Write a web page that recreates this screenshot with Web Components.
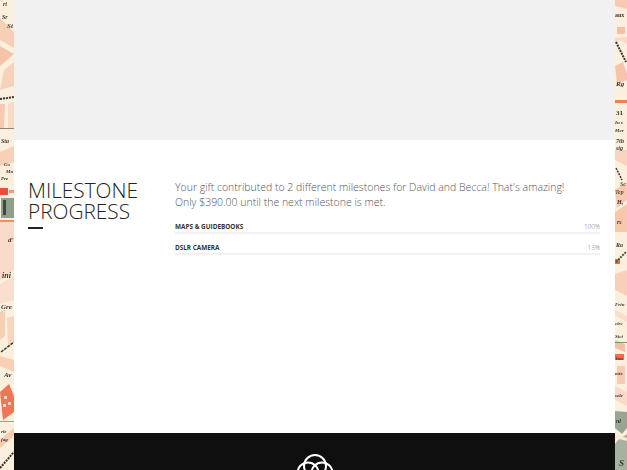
<!DOCTYPE html>
<html>
<head>
<meta charset="utf-8">
<title>Milestone progress</title>
<style>
  html, body { margin: 0; height: 100%; overflow: hidden; }
  body { font-family: "Open Sans", "Liberation Sans", sans-serif; background: #fff; }
</style>
</head>
<body>
<gift-page>
  <map-strip slot="left" side="left"></map-strip>
  <map-strip slot="right" side="right"></map-strip>
  <milestone-section heading="MILESTONE PROGRESS">
    Your gift contributed to 2 different milestones for David and Becca! That's amazing!<br>
    Only $390.00 until the next milestone is met.
    <milestone-bar slot="bars" label="MAPS &amp; GUIDEBOOKS" percent="100%"></milestone-bar>
    <milestone-bar slot="bars" label="DSLR CAMERA" percent="13%"></milestone-bar>
  </milestone-section>
</gift-page>

<script>
const pageTemplate = document.createElement('template');
pageTemplate.innerHTML = `
  <style>
    :host {
      display: flex;
      width: 627px;
      height: 470px;
      overflow: hidden;
    }
    .middle {
      flex: 1;
      display: flex;
      flex-direction: column;
      min-width: 0;
    }
    .hero {
      height: 140px;
      background: #f1f1f1;
    }
    .content {
      flex: 1;
      background: #fff;
    }
    site-footer {
      height: 37px;
    }
  </style>
  <slot name="left"></slot>
  <div class="middle">
    <div class="hero"></div>
    <div class="content"><slot></slot></div>
    <site-footer></site-footer>
  </div>
  <slot name="right"></slot>
`;

class GiftPage extends HTMLElement {
  constructor() {
    super();
    this.attachShadow({ mode: 'open' });
    this.shadowRoot.appendChild(pageTemplate.content.cloneNode(true));
  }
}

// hand drawn scrap of the old street map, one for each edge of the page
const maps = {
  left: { width: 14, art: `
    <polygon points="0,18 14,32 14,48 0,40" fill="#f7cfb6"/>
    <polygon points="0,46 14,54 0,66" fill="#f5c4a8"/>
    <polygon points="4,70 14,62 14,86 0,90" fill="#f7d2bb"/>
    <polygon points="0,104 5,104 4,128 0,128" fill="#f7c9b0"/>
    <polygon points="8,104 14,102 14,128 8,128" fill="#f9dac6"/>
    <polygon points="0,152 14,146 14,162 0,166" fill="#f8cfb7"/>
    <polygon points="0,222 14,220 14,270 0,280" fill="#f9dac8"/>
    <polygon points="0,284 14,276 14,300 0,304" fill="#fadfcf"/>
    <polygon points="0,312 5,310 5,336 0,340" fill="#f7ceb6"/>
    <polygon points="7,318 14,316 14,340 8,346" fill="#f9d4bf"/>
    <polygon points="0,356 14,360 14,372 0,366" fill="#f8ceb5"/>
    <polygon points="0,392 9,384 14,396 14,412 3,420" fill="#f2755a"/>
    <rect x="4" y="396" width="3" height="3" fill="#fbd9c3"/>
    <rect x="3" y="404" width="3" height="3" fill="#fbd9c3"/>
    <rect x="8" y="402" width="3" height="3" fill="#fbd9c3"/>
    <rect x="0" y="188" width="8" height="7" fill="#ee4d37"/>
    <rect x="9" y="190" width="5" height="3" fill="#f29a7e"/>
    <rect x="1" y="198" width="13" height="20" fill="#8f9f8c"/>
    <rect x="3" y="200" width="3" height="15" fill="#3e4a40"/>
    <rect x="0" y="220" width="14" height="2" fill="#ee8f63"/>
    <polygon points="0,440 14,428 14,436 0,448" fill="#f5cbb0"/>
    <rect x="0" y="128" width="14" height="1" fill="#8f8379"/>
    <rect x="0" y="421" width="14" height="1" fill="#a89c8c"/>
    <line x1="0" y1="99" x2="14" y2="97" stroke="#3b3328" stroke-width="2" stroke-dasharray="2 1"/>
    <line x1="1" y1="352" x2="14" y2="342" stroke="#3b3328" stroke-width="1.5" stroke-dasharray="3 1"/>
    <line x1="0" y1="468" x2="14" y2="452" stroke="#3b3328" stroke-width="2" stroke-dasharray="2 1"/>
    <g font-family="'Liberation Serif', serif" font-style="italic" font-weight="700" fill="#3b3328">
      <text x="3" y="6" font-size="6">ri</text>
      <text x="2" y="19" font-size="6">Sr</text>
      <text x="7" y="28" font-size="7">St</text>
      <text x="1" y="143" font-size="6">Sta</text>
      <text x="4" y="166" font-size="5">Go</text>
      <text x="6" y="173" font-size="5">Mu</text>
      <text x="1" y="180" font-size="5">Pre</text>
      <text x="8" y="242" font-size="7">d'</text>
      <text x="2" y="278" font-size="8">ini</text>
      <text x="1" y="309" font-size="7">Gre</text>
      <text x="4" y="377" font-size="7">Av</text>
      <text x="1" y="433" font-size="5">rle</text>
      <text x="1" y="441" font-size="5">fag</text>
    </g>` },
  right: { width: 12, art: `
    <polygon points="0,0 12,0 12,9 0,6" fill="#f7cbb2"/>
    <polygon points="2,27 10,27 10,34 2,34" fill="#f5c0a6"/>
    <polygon points="0,38 12,37 12,44 5,40 0,44" fill="#f9d8c5"/>
    <polygon points="0,66 8,62 12,74 12,80 2,84" fill="#f6c5a9"/>
    <rect x="0" y="100" width="12" height="3" fill="#ef7f5b"/>
    <polygon points="0,150 12,150 12,166 0,160" fill="#f8d3be"/>
    <polygon points="0,190 12,182 12,200 2,208" fill="#f6c9b0"/>
    <polygon points="0,212 12,204 12,232 0,232" fill="#f7c7aa"/>
    <rect x="0" y="259" width="5" height="5" fill="#ee6a4a"/>
    <polygon points="0,274 12,270 12,296 0,290" fill="#f7d0b7"/>
    <polygon points="0,310 12,316 12,322 0,316" fill="#f9ddcd"/>
    <polygon points="0,340 10,344 10,352 0,348" fill="#f5bea5"/>
    <rect x="0" y="354" width="9" height="6" fill="#ee6d4b"/>
    <polygon points="2,366 10,366 10,384 2,384" fill="#f7ccb3"/>
    <polygon points="0,386 12,392 12,406 0,400" fill="#f9dac8"/>
    <rect x="0" y="342" width="12" height="1" fill="#7e9376"/>
    <polygon points="0,411 12,412 12,428 7,434 0,428" fill="#98a593"/>
    <polygon points="3,440 12,434 12,470 0,470 0,444" fill="#a7b1a0"/>
    <polygon points="0,434 12,438 12,441 0,438" fill="#f5e9cf"/>
    <line x1="1" y1="42" x2="11" y2="62" stroke="#39332a" stroke-width="2" stroke-dasharray="2 1"/>
    <line x1="1" y1="168" x2="7" y2="180" stroke="#39332a" stroke-width="1.5" stroke-dasharray="2 1"/>
    <line x1="1" y1="262" x2="11" y2="252" stroke="#4d5a35" stroke-width="2" stroke-dasharray="2 1"/>
    <g font-family="'Liberation Serif', serif" font-style="italic" font-weight="700" fill="#39332a">
      <text x="0" y="17" font-size="6" font-style="normal">aux</text>
      <text x="1" y="86" font-size="7">Rg</text>
      <text x="1" y="115" font-size="7" font-style="normal">31</text>
      <text x="0" y="124" font-size="5">In s</text>
      <text x="0" y="132" font-size="5">Mer</text>
      <text x="1" y="143" font-size="6">7th</text>
      <text x="1" y="150" font-size="6">sig</text>
      <text x="5" y="186" font-size="6" fill="#4d5a35">Sc</text>
      <text x="0" y="194" font-size="6" fill="#4d5a35">Tep</text>
      <text x="2" y="204" font-size="6">H,</text>
      <text x="2" y="224" font-size="6">rs</text>
      <text x="1" y="247" font-size="6">Ra</text>
      <text x="0" y="306" font-size="5">Frin</text>
      <text x="0" y="325" font-size="5">circ</text>
      <text x="0" y="338" font-size="5">Sici</text>
      <text x="1" y="360" font-size="5" fill="#5c2a20">hos</text>
      <text x="0" y="375" font-size="5">mix</text>
      <text x="0" y="397" font-size="5">sele</text>
      <text x="1" y="423" font-size="6">nl</text>
      <text x="4" y="466" font-size="9">S</text>
    </g>` }
};

class MapStrip extends HTMLElement {
  constructor() {
    super();
    this.attachShadow({ mode: 'open' });
  }

  connectedCallback() {
    const map = maps[this.getAttribute('side')];
    this.shadowRoot.innerHTML = `
      <style>
        :host {
          display: block;
          flex: none;
          width: ${map.width}px;
          height: 470px;
          background: #fbf0de;
          overflow: hidden;
        }
        svg {
          display: block;
          filter: blur(.45px);
        }
      </style>
      <svg width="${map.width}" height="470" viewBox="0 0 ${map.width} 470">${map.art}</svg>
    `;
  }
}

const sectionTemplate = document.createElement('template');
sectionTemplate.innerHTML = `
  <style>
    :host {
      display: grid;
      grid-template-columns: 147px 1fr;
      padding: 40px 15px 0 14px;
      color: #555;
    }
    h2 {
      margin: 0;
      font-size: 20.8px;
      line-height: 21px;
      font-weight: 300;
      color: #222;
    }
    h2::after {
      content: '';
      display: block;
      width: 15px;
      height: 2px;
      margin-top: 5px;
      background: #222;
    }
    p {
      margin: 0 0 10.5px;
      font-size: 10.5px;
      line-height: 15px;
      font-weight: 300;
    }
  </style>
  <h2></h2>
  <div>
    <p><slot></slot></p>
    <slot name="bars"></slot>
  </div>
`;

class MilestoneSection extends HTMLElement {
  constructor() {
    super();
    this.attachShadow({ mode: 'open' });
    this.shadowRoot.appendChild(sectionTemplate.content.cloneNode(true));
  }

  connectedCallback() {
    const words = this.getAttribute('heading').split(' ');
    this.shadowRoot.querySelector('h2').innerHTML = words.join('<br>');
  }
}

const barTemplate = document.createElement('template');
barTemplate.innerHTML = `
  <style>
    :host {
      display: block;
      margin-bottom: 8px;
    }
    .row {
      display: flex;
      justify-content: space-between;
      align-items: baseline;
      line-height: 11px;
    }
    .label {
      font-size: 6.4px;
      font-weight: 700;
      color: #333;
    }
    .percent {
      font-size: 6.4px;
      font-weight: 300;
      color: #777;
    }
    .track {
      height: 2px;
      background: #f1f1f1;
    }
  </style>
  <div class="row"><span class="label"></span><span class="percent"></span></div>
  <div class="track"></div>
`;

class MilestoneBar extends HTMLElement {
  constructor() {
    super();
    this.attachShadow({ mode: 'open' });
    this.shadowRoot.appendChild(barTemplate.content.cloneNode(true));
  }

  connectedCallback() {
    this.shadowRoot.querySelector('.label').textContent = this.getAttribute('label');
    this.shadowRoot.querySelector('.percent').textContent = this.getAttribute('percent');
  }
}

const footerTemplate = document.createElement('template');
footerTemplate.innerHTML = `
  <style>
    :host {
      display: flex;
      justify-content: center;
      flex: none;
      background: #0f0f0f;
      overflow: hidden;
    }
    svg {
      display: block;
      margin-top: 21px;
      flex: none;
    }
  </style>
  <svg width="38" height="34" viewBox="0 0 38 34" fill="none" stroke="#fff" stroke-width="2">
    <circle cx="19" cy="12" r="11"/>
    <circle cx="12" cy="19" r="10.5"/>
    <circle cx="26" cy="19" r="10.5"/>
  </svg>
`;

class SiteFooter extends HTMLElement {
  constructor() {
    super();
    this.attachShadow({ mode: 'open' });
    this.shadowRoot.appendChild(footerTemplate.content.cloneNode(true));
  }
}

customElements.define('map-strip', MapStrip);
customElements.define('milestone-bar', MilestoneBar);
customElements.define('milestone-section', MilestoneSection);
customElements.define('site-footer', SiteFooter);
customElements.define('gift-page', GiftPage);
</script>
</body>
</html>
